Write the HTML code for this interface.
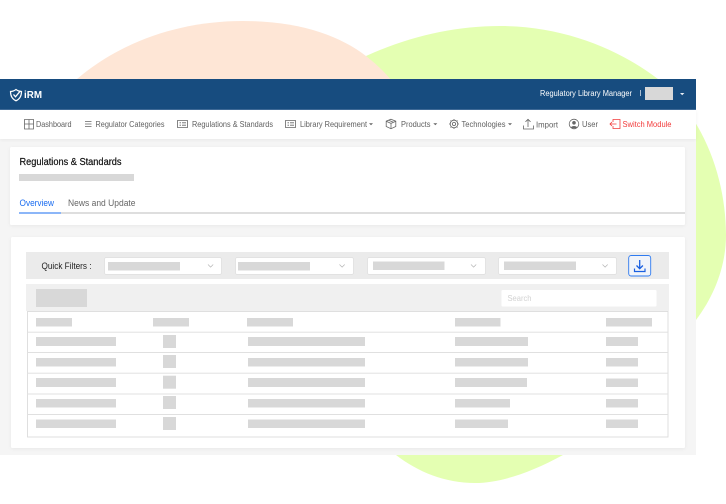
<!DOCTYPE html>
<html><head><meta charset="utf-8"><style>
html,body{margin:0;padding:0;background:#fff;width:726px;height:504px;overflow:hidden}
svg{display:block;filter:blur(.25px)}
text{font-family:"Liberation Sans",sans-serif}
.n{font-size:8.600px;fill:#5f5f5f}
.i{fill:none;stroke:#666;stroke-width:.8}
.b{fill:#d8d8d8}
</style></head><body>
<svg width="726" height="504" viewBox="0 0 726 504" xmlns="http://www.w3.org/2000/svg">
<defs>
<filter id="s" x="-5%" y="-10%" width="110%" height="120%"><feDropShadow dx="0" dy="1" stdDeviation="1.500" flood-color="#000" flood-opacity=".05"/></filter>
</defs>
<path fill="#e4ffb2" d="M366 56C410 36 455 26 500 26C565 26 620 50 658 79C705 118 726 180 726 235C726 265 715 295 696 320C660 385 615 430 563 455C530 473 500 483 475 483C445 483 418 472 396 455L300 200Z"/>
<path fill="#fee6d6" d="M60 95C105 48 170 21 243 21C300 21 340 36 366 56C380 67 392 79 402 95Z"/>

<rect x="0" y="79" width="696" height="376" fill="#f5f5f5"/>
<rect x="0" y="79" width="696" height="30" fill="#174c7f"/>
<rect x="0" y="109" width="696" height="1" fill="#3e6a97"/>
<rect x="0" y="110" width="696" height="29" fill="#fff" filter="url(#s)"/>

<!-- header -->
<path d="M16 89.500C14 91 12 91.500 10.500 91.500C10.500 95.500 12 99 16 100.800C20 99 21.500 95.500 21.500 91.500C20 91.500 18 91 16 89.500Z" fill="none" stroke="#fff" stroke-width="1.200"/>
<path d="M13.500 94.500L15.500 96.800L20.500 90.800" fill="none" stroke="#fff" stroke-width="1.300"/>
<text x="24" y="98" font-size="10.500" font-weight="700" fill="#fff" textLength="18" lengthAdjust="spacingAndGlyphs">iRM</text>
<text x="540" y="96" font-size="8.600" fill="#fff" textLength="92" lengthAdjust="spacingAndGlyphs">Regulatory Library Manager</text>
<rect x="640" y="90" width=".8" height="6" fill="#cfdbe6"/>
<rect x="645" y="87" width="28" height="13" fill="#d8d8d8"/>
<path d="M680 93h4.400l-2.200 2.200z" fill="#e8eef4"/>

<!-- nav -->
<path class="i" d="M24.500 119.500h9v9.500h-9zM24.500 124h9M29 119.500v9.500"/>
<text class="n" x="36" y="127" textLength="35.500" lengthAdjust="spacingAndGlyphs">Dashboard</text>
<path class="i" d="M85 121.500h6.500M85 124h6.500M85 126.500h6.500"/>
<text class="n" x="95.500" y="127" textLength="69" lengthAdjust="spacingAndGlyphs">Regulator Categories</text>
<path class="i" d="M177.500 120.500h10v7h-10zM179.500 122.800h1.500M182 122.800h4M179.500 125.200h1.500M182 125.200h4"/>
<text class="n" x="192" y="127" textLength="81" lengthAdjust="spacingAndGlyphs">Regulations &amp; Standards</text>
<path class="i" d="M285.500 120.500h10v7h-10zM287.500 122.800h1.500M290 122.800h4M287.500 125.200h1.500M290 125.200h4"/>
<text class="n" x="300" y="127" textLength="67" lengthAdjust="spacingAndGlyphs">Library Requirement</text>
<path d="M369 123.200h4l-2 2z" fill="#666"/>
<path class="i" d="M391 119.200l4.800 2v5.300l-4.800 2.200-4.800-2.200v-5.300zM386.200 121.200l4.800 2.200 4.800-2.200M391 123.400v5.300M388.600 120.200l4.800 2.100"/>
<text class="n" x="401" y="127" textLength="29.500" lengthAdjust="spacingAndGlyphs">Products</text>
<path d="M433.300 123.200h4l-2 2z" fill="#666"/>
<circle class="i" cx="454" cy="124" r="3.800" stroke-width="1"/><circle class="i" cx="454" cy="124" r="1.600"/>
<path class="i" d="M454 119v1.200M454 127.800v1.200M449 124h1.200M457.800 124h1.200M450.500 120.500l.8.800M456.700 126.700l.8.800M450.500 127.500l.8-.8M456.700 121.300l.8-.8"/>
<text class="n" x="461.500" y="127" textLength="44" lengthAdjust="spacingAndGlyphs">Technologies</text>
<path d="M508 123.200h4l-2 2z" fill="#666"/>
<path class="i" d="M528 127v-7.500M525.500 121.800l2.500-2.500 2.500 2.500M523.500 125.500v3.500h10v-3.500"/>
<text class="n" x="536" y="127.500" textLength="22" lengthAdjust="spacingAndGlyphs">Import</text>
<circle class="i" cx="574" cy="124" r="4.800"/><circle cx="574" cy="122.800" r="1.800" fill="#666"/><path d="M570.800 127.500c1-2 5.400-2 6.400 0l-1 .8h-4.400z" fill="#666"/>
<text class="n" x="582" y="127" textLength="16" lengthAdjust="spacingAndGlyphs">User</text>
<path d="M613 122v-2.500h7v9h-7V126M616.500 124H610M612 122l-2 2 2 2" fill="none" stroke="#f23b3b" stroke-width=".8"/>
<text x="622.500" y="127" font-size="8.600" fill="#f23b3b" textLength="49" lengthAdjust="spacingAndGlyphs">Switch Module</text>

<!-- card 1 -->
<rect x="10" y="147" width="675" height="78" rx="1.500" fill="#fff" filter="url(#s)"/>
<text x="19.500" y="165" font-size="10" fill="#111" stroke="#111" stroke-width=".2" textLength="102" lengthAdjust="spacingAndGlyphs">Regulations &amp; Standards</text>
<rect class="b" x="19" y="174" width="115" height="7"/>
<text x="19.500" y="206" font-size="9" fill="#1a6cf0" textLength="34.500" lengthAdjust="spacingAndGlyphs">Overview</text>
<text x="68" y="206" font-size="9" fill="#666" textLength="67.500" lengthAdjust="spacingAndGlyphs">News and  Update</text>
<rect x="19" y="212.500" width="666" height="1" fill="#bdbdbd"/>
<rect x="19" y="212.500" width="42" height="1" fill="#1a6cf0"/>

<!-- card 2 -->
<rect x="11" y="237" width="674" height="211" rx="1.500" fill="#fff" filter="url(#s)"/>
<rect x="26" y="252" width="643" height="27" fill="#ebebeb"/>
<text x="41.500" y="269" font-size="8.800" fill="#222" textLength="50" lengthAdjust="spacingAndGlyphs">Quick Filters :</text>
<g fill="#fff" stroke="#dcdcdc" stroke-width=".7">
<rect x="104.500" y="257.500" width="117" height="17" rx="2"/>
<rect x="235.500" y="257.500" width="118" height="17" rx="2"/>
<rect x="367.500" y="257.500" width="118" height="17" rx="2"/>
<rect x="498.500" y="257.500" width="118" height="17" rx="2"/>
</g>
<rect class="b" x="108" y="262" width="72" height="8.500"/>
<rect class="b" x="238" y="262" width="72" height="8.500"/>
<rect class="b" x="373" y="261.500" width="71.500" height="8.500"/>
<rect class="b" x="504" y="261.500" width="72" height="8.500"/>
<g fill="none" stroke="#b5b5b5" stroke-width=".7">
<path d="M208 264.500l2.600 2.600 2.600-2.600M339.500 264.500l2.600 2.600 2.600-2.600M471 264.500l2.600 2.600 2.600-2.600M602.500 264.500l2.600 2.600 2.600-2.600"/>
</g>
<rect x="628.700" y="255.500" width="22" height="20.500" rx="2.500" fill="#f1f4fa" stroke="#2f7bf0" stroke-width=".9"/>
<path d="M639.700 260v8.500M636.500 265.500l3.200 3.200 3.200-3.200" fill="none" stroke="#1a5fe0" stroke-width="1.300"/>
<path d="M634.500 268.500v3h10.500v-3" fill="none" stroke="#1a5fe0" stroke-width="1.200"/>

<rect x="26" y="284" width="643" height="27" fill="#f0f0f0"/>
<rect class="b" x="36" y="289" width="51" height="18"/>
<rect x="501.500" y="290" width="155" height="16.500" rx="1" fill="#fff"/>
<text x="507.500" y="301" font-size="7.800" fill="#d2d2d2" textLength="24" lengthAdjust="spacingAndGlyphs">Search</text>

<!-- table -->
<rect x="27.500" y="311.500" width="640.500" height="125.500" fill="#fff" stroke="#dcdcdc" stroke-width=".9"/>
<g fill="#e0e0e0">
<rect x="27" y="331.700" width="641" height="1"/>
<rect x="27" y="352" width="641" height="1"/>
<rect x="27" y="372.700" width="641" height="1"/>
<rect x="27" y="393.500" width="641" height="1"/>
<rect x="27" y="414" width="641" height="1"/>
</g>
<g fill="#d8d8d8">
<rect x="36" y="318" width="36" height="8.500"/><rect x="153" y="318" width="36" height="8.500"/><rect x="247" y="318" width="46" height="8.500"/><rect x="455" y="318" width="45.500" height="8.500"/><rect x="606" y="318" width="46" height="8.500"/>

<rect x="36" y="337" width="80" height="9"/><rect x="163" y="335" width="13" height="13"/><rect x="248" y="337" width="117" height="9"/><rect x="455" y="337" width="73" height="9"/><rect x="606" y="337" width="32" height="9"/>
<rect x="36" y="358" width="80" height="8.500"/><rect x="163" y="355" width="13" height="13"/><rect x="248" y="358" width="117" height="8.500"/><rect x="455" y="358" width="73" height="8.500"/><rect x="606" y="358" width="32" height="8.500"/>
<rect x="36" y="378" width="80" height="9"/><rect x="163" y="375.700" width="13" height="13"/><rect x="248" y="378" width="117" height="9"/><rect x="455" y="378" width="72" height="9"/><rect x="606" y="378.500" width="32" height="8.500"/>
<rect x="36" y="399" width="80" height="8.500"/><rect x="163" y="396" width="13" height="13"/><rect x="248" y="399" width="117" height="8.500"/><rect x="455" y="399" width="55" height="8.500"/><rect x="606" y="399" width="32" height="8.500"/>
<rect x="36" y="419.500" width="80" height="8.500"/><rect x="163" y="417" width="13" height="13"/><rect x="248" y="419.500" width="117" height="8.500"/><rect x="455" y="419.500" width="53" height="8.500"/><rect x="606" y="419.500" width="32" height="8.500"/>
</g>
</svg>
</body></html>
